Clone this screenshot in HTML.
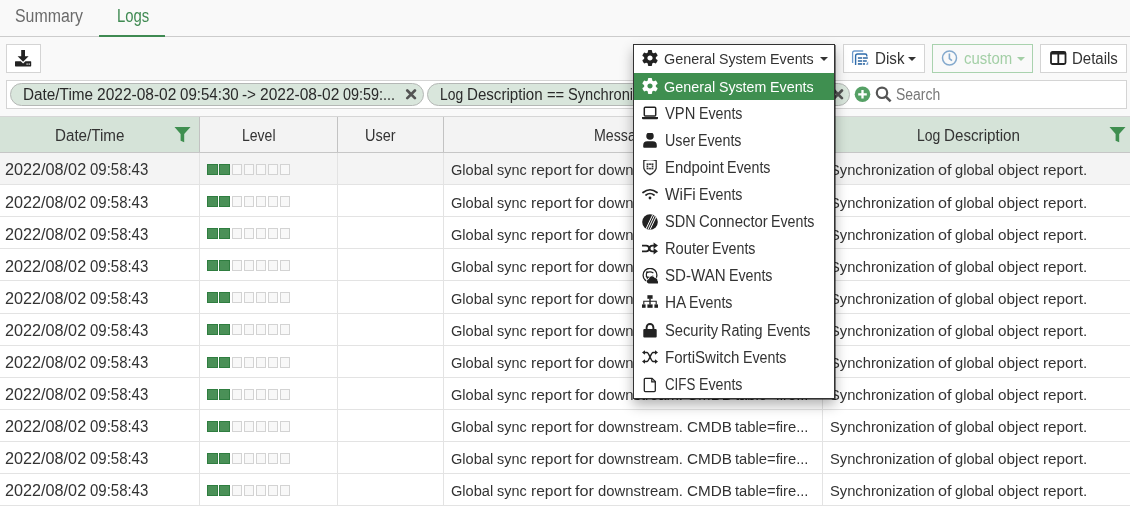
<!DOCTYPE html>
<html><head><meta charset="utf-8"><style>
html,body{margin:0;padding:0}
body{width:1130px;height:514px;overflow:hidden;position:relative;background:#f9f9f9;font-family:"Liberation Sans",sans-serif;color:#333}
#w{position:absolute;left:0;top:0;width:1130px;height:514px;will-change:transform}
.t{position:absolute;white-space:nowrap;transform-origin:0 0}
.r{position:absolute}
.btn{position:absolute;background:#fff;border:1px solid #d4d4d4}
.chip{position:absolute;height:21px;border:1px solid #b5b8b6;border-radius:12px;background:#d9e6dc}
.caret{position:absolute;width:0;height:0;border-left:4px solid transparent;border-right:4px solid transparent;border-top:4px solid #333}
</style></head><body><div id="w">
<div class="t" style="left:14.80px;top:7px;font-size:18px;line-height:18px;transform:scaleX(0.8831);color:#6a6a6a;">Summary</div>
<div class="t" style="left:116.80px;top:7px;font-size:18px;line-height:18px;transform:scaleX(0.8271);color:#3f8a52;">Logs</div>
<div class="r" style="left:0px;top:36px;width:1130px;height:1px;background:#cccccc;"></div>
<div class="r" style="left:99px;top:35px;width:66px;height:2px;background:#3f8a52;"></div>
<div class="btn" style="left:6px;top:44px;width:33px;height:27px"></div>
<svg class="r" style="left:15px;top:50px" width="17" height="17" viewBox="0 0 17 17">
<path d="M6.2 0h3.8v6.2h3.6L8.1 11.8 2.6 6.2h3.6z" fill="#222"/>
<path d="M0.6 11.2h5.2l2.3 2.3 2.3-2.3h5.2a0.6 0.6 0 0 1 0.6 0.6v4a0.6 0.6 0 0 1-0.6 0.6H0.6a0.6 0.6 0 0 1-0.6-0.6v-4a0.6 0.6 0 0 1 0.6-0.6z" fill="#222"/>
<rect x="11.5" y="13.5" width="1.2" height="1.2" fill="#fff"/><rect x="13.6" y="13.5" width="1.2" height="1.2" fill="#fff"/>
</svg>
<div class="btn" style="left:843px;top:44px;width:80px;height:27px"></div>
<svg class="r" style="left:846px;top:46px" width="26" height="22" viewBox="0 0 26 22">
<path d="M6.6 17V7a2 2 0 0 1 2-2h8.6" fill="none" stroke="#6d9acb" stroke-width="1.3"/>
<path d="M9.6 19V10a2 2 0 0 1 2-2h7.6a1.6 1.6 0 0 1 1.6 1.6v0.9" fill="none" stroke="#2f6cab" stroke-width="1.4"/>
<g fill="#1f5c9c"><rect x="11.9" y="11.3" width="4.3" height="1.4"/><rect x="17" y="11.3" width="4.8" height="1.4"/><rect x="11.9" y="14.3" width="4.3" height="1.4"/><rect x="17" y="14.3" width="3.8" height="1.4"/><rect x="11.9" y="17.2" width="4.3" height="1.5"/><rect x="17" y="17.2" width="2" height="1.5"/></g>
<path d="M19.8 18.8l2.4-3.6v3.6z" fill="#6d9acb"/>
</svg>
<div class="t" style="left:874.70px;top:51px;font-size:16px;line-height:16px;transform:scaleX(0.9470);color:#333;">Disk</div>
<div class="caret" style="left:908px;top:57px"></div>
<div class="btn" style="left:932px;top:44px;width:99px;height:27px;border-color:#a9d2ae;background:#f9f9f9"></div>
<svg class="r" style="left:941px;top:50px" width="17" height="17" viewBox="0 0 17 17">
<circle cx="8.5" cy="8" r="7" fill="none" stroke="#84a9cd" stroke-width="1.5"/>
<path d="M8.4 3.6v5l2.6 2.1" fill="none" stroke="#84a9cd" stroke-width="1.6"/>
</svg>
<div class="t" style="left:963.70px;top:51px;font-size:16px;line-height:16px;transform:scaleX(0.9331);color:#a3cfa6;">custom</div>
<div class="caret" style="left:1017px;top:57px;border-top-color:#a3cfa6"></div>
<div class="btn" style="left:1040px;top:44px;width:85px;height:27px"></div>
<svg class="r" style="left:1050px;top:51px" width="17" height="14" viewBox="0 0 17 14">
<rect x="1" y="1" width="14.5" height="12" rx="1.5" fill="none" stroke="#222" stroke-width="1.8"/>
<rect x="1" y="1" width="14.5" height="2.5" fill="#222"/>
<rect x="7.4" y="2" width="1.8" height="11" fill="#222"/>
</svg>
<div class="t" style="left:1072.00px;top:51px;font-size:16px;line-height:16px;transform:scaleX(0.9366);color:#333;">Details</div>
<div class="btn" style="left:6px;top:80px;width:1119px;height:27px"></div>
<div class="chip" style="left:10px;top:83px;width:412px"></div>
<div class="t" style="left:23.00px;top:87px;font-size:16px;line-height:16px;transform:scaleX(0.9572);color:#2a2a2a;">Date/Time</div>
<div class="t" style="left:96.82px;top:87px;font-size:16px;line-height:16px;transform:scaleX(0.9695);color:#2a2a2a;">2022-08-02</div>
<div class="t" style="left:179.94px;top:87px;font-size:16px;line-height:16px;transform:scaleX(0.9417);color:#2a2a2a;">09:54:30</div>
<div class="t" style="left:242.38px;top:87px;font-size:16px;line-height:16px;transform:scaleX(0.9559);color:#2a2a2a;">-&gt;</div>
<div class="t" style="left:260.18px;top:87px;font-size:16px;line-height:16px;transform:scaleX(0.9695);color:#2a2a2a;">2022-08-02</div>
<div class="t" style="left:343.31px;top:87px;font-size:16px;line-height:16px;transform:scaleX(0.8994);color:#2a2a2a;">09:59:...</div>
<svg class="r" style="left:405px;top:89px" width="12" height="12" viewBox="0 0 12 12"><path d="M2.3 1.5l7.6 7.6M9.9 1.5l-7.6 7.6" stroke="#545454" stroke-width="2.7" stroke-linecap="round"/></svg>
<div class="chip" style="left:427px;top:83px;width:421px"></div>
<div class="t" style="left:440.30px;top:87px;font-size:16px;line-height:16px;transform:scaleX(0.8676);color:#2a2a2a;">Log</div>
<div class="t" style="left:467.29px;top:87px;font-size:16px;line-height:16px;transform:scaleX(0.9442);color:#2a2a2a;">Description</div>
<div class="t" style="left:546.69px;top:87px;font-size:16px;line-height:16px;transform:scaleX(0.9212);color:#2a2a2a;">==</div>
<div class="t" style="left:567.72px;top:87px;font-size:16px;line-height:16px;transform:scaleX(0.9152);color:#2a2a2a;">Synchronization</div>
<div class="t" style="left:675.73px;top:87px;font-size:16px;line-height:16px;transform:scaleX(1.0048);color:#2a2a2a;">of</div>
<div class="t" style="left:692.72px;top:87px;font-size:16px;line-height:16px;transform:scaleX(0.9100);color:#2a2a2a;">global</div>
<div class="t" style="left:735.37px;top:87px;font-size:16px;line-height:16px;transform:scaleX(0.9494);color:#2a2a2a;">object</div>
<div class="t" style="left:779.73px;top:87px;font-size:16px;line-height:16px;transform:scaleX(0.9493);color:#2a2a2a;">report.</div>
<svg class="r" style="left:832px;top:89px" width="12" height="12" viewBox="0 0 12 12"><path d="M2.3 1.5l7.6 7.6M9.9 1.5l-7.6 7.6" stroke="#545454" stroke-width="2.7" stroke-linecap="round"/></svg>
<svg class="r" style="left:854px;top:86px" width="17" height="17" viewBox="0 0 17 17">
<circle cx="8.5" cy="8.3" r="7.8" fill="#55a065"/><path d="M8.5 4v8.6M4.2 8.3h8.6" stroke="#fff" stroke-width="2.3"/></svg>
<svg class="r" style="left:875px;top:86px" width="17" height="17" viewBox="0 0 17 17">
<circle cx="7" cy="6.8" r="5.2" fill="none" stroke="#555" stroke-width="2.2"/><path d="M10.8 10.6l4.8 4.8" stroke="#555" stroke-width="2.6"/></svg>
<div class="t" style="left:895.80px;top:87px;font-size:16px;line-height:16px;transform:scaleX(0.8718);color:#777;">Search</div>
<div class="r" style="left:0px;top:116px;width:1130px;height:1px;background:#d6d6d6;"></div>
<div class="r" style="left:0px;top:117px;width:1130px;height:35px;background:#f3f3f3;"></div>
<div class="r" style="left:0px;top:117px;width:199px;height:35px;background:#d5e3d8;"></div>
<div class="r" style="left:823px;top:117px;width:307px;height:35px;background:#d5e3d8;"></div>
<div class="r" style="left:0px;top:152px;width:1130px;height:1px;background:#c6c6c6;"></div>
<div class="r" style="left:199px;top:117px;width:1px;height:35px;background:#c2c2c2;"></div>
<div class="r" style="left:337px;top:117px;width:1px;height:35px;background:#c2c2c2;"></div>
<div class="r" style="left:443px;top:117px;width:1px;height:35px;background:#c2c2c2;"></div>
<div class="r" style="left:822px;top:117px;width:1px;height:35px;background:#c2c2c2;"></div>
<div class="t" style="left:54.60px;top:128px;font-size:16px;line-height:16px;transform:scaleX(0.9481);color:#333;">Date/Time</div>
<div class="t" style="left:242.00px;top:128px;font-size:16px;line-height:16px;transform:scaleX(0.8758);color:#333;">Level</div>
<div class="t" style="left:365.00px;top:128px;font-size:16px;line-height:16px;transform:scaleX(0.9053);color:#333;">User</div>
<div class="t" style="left:594.00px;top:128px;font-size:16px;line-height:16px;transform:scaleX(0.8883);color:#333;">Message</div>
<div class="t" style="left:916.60px;top:128px;font-size:16px;line-height:16px;transform:scaleX(0.8718);color:#333;">Log</div>
<div class="t" style="left:943.72px;top:128px;font-size:16px;line-height:16px;transform:scaleX(0.9487);color:#333;">Description</div>
<svg class="r" style="left:174px;top:126px" width="17" height="17" viewBox="0 0 17 17"><path d="M0.5 1h16l-6.3 7v8.3l-3.6-1.6V8z" fill="#3f8f50"/></svg>
<svg class="r" style="left:1109px;top:126px" width="17" height="17" viewBox="0 0 17 17"><path d="M0.5 1h16l-6.3 7v8.3l-3.6-1.6V8z" fill="#3f8f50"/></svg>
<div class="r" style="left:0px;top:153px;width:1130px;height:31px;background:#f4f4f4;"></div>
<div class="r" style="left:0px;top:184px;width:1130px;height:1px;background:#e3e3e3;"></div>
<div class="r" style="left:199px;top:153px;width:1px;height:31px;background:#e3e3e3;"></div>
<div class="r" style="left:337px;top:153px;width:1px;height:31px;background:#e3e3e3;"></div>
<div class="r" style="left:443px;top:153px;width:1px;height:31px;background:#e3e3e3;"></div>
<div class="r" style="left:822px;top:153px;width:1px;height:31px;background:#e3e3e3;"></div>
<div class="t" style="left:4.80px;top:161px;font-size:16.5px;line-height:16.5px;transform:scaleX(0.9826);color:#333;">2022/08/02</div>
<div class="t" style="left:89.72px;top:161px;font-size:16.5px;line-height:16.5px;transform:scaleX(0.9070);color:#333;">09:58:43</div>
<div class="r" style="left:207px;top:164px;width:9px;height:9px;background:#4a9057;border:1px solid #2f7d40"></div>
<div class="r" style="left:219px;top:164px;width:9px;height:9px;background:#4a9057;border:1px solid #2f7d40"></div>
<div class="r" style="left:232px;top:164px;width:8px;height:9px;background:#f8f8f8;border:1px solid #d3d3d3"></div>
<div class="r" style="left:244px;top:164px;width:8px;height:9px;background:#f8f8f8;border:1px solid #d3d3d3"></div>
<div class="r" style="left:256px;top:164px;width:8px;height:9px;background:#f8f8f8;border:1px solid #d3d3d3"></div>
<div class="r" style="left:268px;top:164px;width:8px;height:9px;background:#f8f8f8;border:1px solid #d3d3d3"></div>
<div class="r" style="left:280px;top:164px;width:8px;height:9px;background:#f8f8f8;border:1px solid #d3d3d3"></div>
<div class="t" style="left:451.30px;top:162px;font-size:15.5px;line-height:15.5px;transform:scaleX(0.9428);color:#333;">Global</div>
<div class="t" style="left:497.35px;top:162px;font-size:15.5px;line-height:15.5px;transform:scaleX(0.9285);color:#333;">sync</div>
<div class="t" style="left:530.72px;top:162px;font-size:15.5px;line-height:15.5px;transform:scaleX(1.0047);color:#333;">report</div>
<div class="t" style="left:575.27px;top:162px;font-size:15.5px;line-height:15.5px;transform:scaleX(1.0469);color:#333;">for</div>
<div class="t" style="left:597.71px;top:162px;font-size:15.5px;line-height:15.5px;transform:scaleX(0.9575);color:#333;">downstream.</div>
<div class="t" style="left:686.54px;top:162px;font-size:15.5px;line-height:15.5px;transform:scaleX(0.9842);color:#333;">CMDB</div>
<div class="t" style="left:735.30px;top:162px;font-size:15.5px;line-height:15.5px;transform:scaleX(0.9527);color:#333;">table=fire...</div>
<div class="t" style="left:829.70px;top:162px;font-size:15.5px;line-height:15.5px;transform:scaleX(0.9498);color:#333;">Synchronization</div>
<div class="t" style="left:938.30px;top:162px;font-size:15.5px;line-height:15.5px;transform:scaleX(1.0453);color:#333;">of</div>
<div class="t" style="left:955.38px;top:162px;font-size:15.5px;line-height:15.5px;transform:scaleX(0.9448);color:#333;">global</div>
<div class="t" style="left:998.26px;top:162px;font-size:15.5px;line-height:15.5px;transform:scaleX(0.9857);color:#333;">object</div>
<div class="t" style="left:1042.85px;top:162px;font-size:15.5px;line-height:15.5px;transform:scaleX(0.9854);color:#333;">report.</div>
<div class="r" style="left:0px;top:185px;width:1130px;height:31px;background:#ffffff;"></div>
<div class="r" style="left:0px;top:216px;width:1130px;height:1px;background:#e3e3e3;"></div>
<div class="r" style="left:199px;top:185px;width:1px;height:31px;background:#e3e3e3;"></div>
<div class="r" style="left:337px;top:185px;width:1px;height:31px;background:#e3e3e3;"></div>
<div class="r" style="left:443px;top:185px;width:1px;height:31px;background:#e3e3e3;"></div>
<div class="r" style="left:822px;top:185px;width:1px;height:31px;background:#e3e3e3;"></div>
<div class="t" style="left:4.80px;top:194px;font-size:16.5px;line-height:16.5px;transform:scaleX(0.9826);color:#333;">2022/08/02</div>
<div class="t" style="left:89.72px;top:194px;font-size:16.5px;line-height:16.5px;transform:scaleX(0.9070);color:#333;">09:58:43</div>
<div class="r" style="left:207px;top:196px;width:9px;height:9px;background:#4a9057;border:1px solid #2f7d40"></div>
<div class="r" style="left:219px;top:196px;width:9px;height:9px;background:#4a9057;border:1px solid #2f7d40"></div>
<div class="r" style="left:232px;top:196px;width:8px;height:9px;background:#f8f8f8;border:1px solid #d3d3d3"></div>
<div class="r" style="left:244px;top:196px;width:8px;height:9px;background:#f8f8f8;border:1px solid #d3d3d3"></div>
<div class="r" style="left:256px;top:196px;width:8px;height:9px;background:#f8f8f8;border:1px solid #d3d3d3"></div>
<div class="r" style="left:268px;top:196px;width:8px;height:9px;background:#f8f8f8;border:1px solid #d3d3d3"></div>
<div class="r" style="left:280px;top:196px;width:8px;height:9px;background:#f8f8f8;border:1px solid #d3d3d3"></div>
<div class="t" style="left:451.30px;top:195px;font-size:15.5px;line-height:15.5px;transform:scaleX(0.9428);color:#333;">Global</div>
<div class="t" style="left:497.35px;top:195px;font-size:15.5px;line-height:15.5px;transform:scaleX(0.9285);color:#333;">sync</div>
<div class="t" style="left:530.72px;top:195px;font-size:15.5px;line-height:15.5px;transform:scaleX(1.0047);color:#333;">report</div>
<div class="t" style="left:575.27px;top:195px;font-size:15.5px;line-height:15.5px;transform:scaleX(1.0469);color:#333;">for</div>
<div class="t" style="left:597.71px;top:195px;font-size:15.5px;line-height:15.5px;transform:scaleX(0.9575);color:#333;">downstream.</div>
<div class="t" style="left:686.54px;top:195px;font-size:15.5px;line-height:15.5px;transform:scaleX(0.9842);color:#333;">CMDB</div>
<div class="t" style="left:735.30px;top:195px;font-size:15.5px;line-height:15.5px;transform:scaleX(0.9527);color:#333;">table=fire...</div>
<div class="t" style="left:829.70px;top:195px;font-size:15.5px;line-height:15.5px;transform:scaleX(0.9498);color:#333;">Synchronization</div>
<div class="t" style="left:938.30px;top:195px;font-size:15.5px;line-height:15.5px;transform:scaleX(1.0453);color:#333;">of</div>
<div class="t" style="left:955.38px;top:195px;font-size:15.5px;line-height:15.5px;transform:scaleX(0.9448);color:#333;">global</div>
<div class="t" style="left:998.26px;top:195px;font-size:15.5px;line-height:15.5px;transform:scaleX(0.9857);color:#333;">object</div>
<div class="t" style="left:1042.85px;top:195px;font-size:15.5px;line-height:15.5px;transform:scaleX(0.9854);color:#333;">report.</div>
<div class="r" style="left:0px;top:217px;width:1130px;height:31px;background:#ffffff;"></div>
<div class="r" style="left:0px;top:248px;width:1130px;height:1px;background:#e3e3e3;"></div>
<div class="r" style="left:199px;top:217px;width:1px;height:31px;background:#e3e3e3;"></div>
<div class="r" style="left:337px;top:217px;width:1px;height:31px;background:#e3e3e3;"></div>
<div class="r" style="left:443px;top:217px;width:1px;height:31px;background:#e3e3e3;"></div>
<div class="r" style="left:822px;top:217px;width:1px;height:31px;background:#e3e3e3;"></div>
<div class="t" style="left:4.80px;top:226px;font-size:16.5px;line-height:16.5px;transform:scaleX(0.9826);color:#333;">2022/08/02</div>
<div class="t" style="left:89.72px;top:226px;font-size:16.5px;line-height:16.5px;transform:scaleX(0.9070);color:#333;">09:58:43</div>
<div class="r" style="left:207px;top:228px;width:9px;height:9px;background:#4a9057;border:1px solid #2f7d40"></div>
<div class="r" style="left:219px;top:228px;width:9px;height:9px;background:#4a9057;border:1px solid #2f7d40"></div>
<div class="r" style="left:232px;top:228px;width:8px;height:9px;background:#f8f8f8;border:1px solid #d3d3d3"></div>
<div class="r" style="left:244px;top:228px;width:8px;height:9px;background:#f8f8f8;border:1px solid #d3d3d3"></div>
<div class="r" style="left:256px;top:228px;width:8px;height:9px;background:#f8f8f8;border:1px solid #d3d3d3"></div>
<div class="r" style="left:268px;top:228px;width:8px;height:9px;background:#f8f8f8;border:1px solid #d3d3d3"></div>
<div class="r" style="left:280px;top:228px;width:8px;height:9px;background:#f8f8f8;border:1px solid #d3d3d3"></div>
<div class="t" style="left:451.30px;top:227px;font-size:15.5px;line-height:15.5px;transform:scaleX(0.9428);color:#333;">Global</div>
<div class="t" style="left:497.35px;top:227px;font-size:15.5px;line-height:15.5px;transform:scaleX(0.9285);color:#333;">sync</div>
<div class="t" style="left:530.72px;top:227px;font-size:15.5px;line-height:15.5px;transform:scaleX(1.0047);color:#333;">report</div>
<div class="t" style="left:575.27px;top:227px;font-size:15.5px;line-height:15.5px;transform:scaleX(1.0469);color:#333;">for</div>
<div class="t" style="left:597.71px;top:227px;font-size:15.5px;line-height:15.5px;transform:scaleX(0.9575);color:#333;">downstream.</div>
<div class="t" style="left:686.54px;top:227px;font-size:15.5px;line-height:15.5px;transform:scaleX(0.9842);color:#333;">CMDB</div>
<div class="t" style="left:735.30px;top:227px;font-size:15.5px;line-height:15.5px;transform:scaleX(0.9527);color:#333;">table=fire...</div>
<div class="t" style="left:829.70px;top:227px;font-size:15.5px;line-height:15.5px;transform:scaleX(0.9498);color:#333;">Synchronization</div>
<div class="t" style="left:938.30px;top:227px;font-size:15.5px;line-height:15.5px;transform:scaleX(1.0453);color:#333;">of</div>
<div class="t" style="left:955.38px;top:227px;font-size:15.5px;line-height:15.5px;transform:scaleX(0.9448);color:#333;">global</div>
<div class="t" style="left:998.26px;top:227px;font-size:15.5px;line-height:15.5px;transform:scaleX(0.9857);color:#333;">object</div>
<div class="t" style="left:1042.85px;top:227px;font-size:15.5px;line-height:15.5px;transform:scaleX(0.9854);color:#333;">report.</div>
<div class="r" style="left:0px;top:249px;width:1130px;height:31px;background:#ffffff;"></div>
<div class="r" style="left:0px;top:280px;width:1130px;height:1px;background:#e3e3e3;"></div>
<div class="r" style="left:199px;top:249px;width:1px;height:31px;background:#e3e3e3;"></div>
<div class="r" style="left:337px;top:249px;width:1px;height:31px;background:#e3e3e3;"></div>
<div class="r" style="left:443px;top:249px;width:1px;height:31px;background:#e3e3e3;"></div>
<div class="r" style="left:822px;top:249px;width:1px;height:31px;background:#e3e3e3;"></div>
<div class="t" style="left:4.80px;top:258px;font-size:16.5px;line-height:16.5px;transform:scaleX(0.9826);color:#333;">2022/08/02</div>
<div class="t" style="left:89.72px;top:258px;font-size:16.5px;line-height:16.5px;transform:scaleX(0.9070);color:#333;">09:58:43</div>
<div class="r" style="left:207px;top:260px;width:9px;height:9px;background:#4a9057;border:1px solid #2f7d40"></div>
<div class="r" style="left:219px;top:260px;width:9px;height:9px;background:#4a9057;border:1px solid #2f7d40"></div>
<div class="r" style="left:232px;top:260px;width:8px;height:9px;background:#f8f8f8;border:1px solid #d3d3d3"></div>
<div class="r" style="left:244px;top:260px;width:8px;height:9px;background:#f8f8f8;border:1px solid #d3d3d3"></div>
<div class="r" style="left:256px;top:260px;width:8px;height:9px;background:#f8f8f8;border:1px solid #d3d3d3"></div>
<div class="r" style="left:268px;top:260px;width:8px;height:9px;background:#f8f8f8;border:1px solid #d3d3d3"></div>
<div class="r" style="left:280px;top:260px;width:8px;height:9px;background:#f8f8f8;border:1px solid #d3d3d3"></div>
<div class="t" style="left:451.30px;top:259px;font-size:15.5px;line-height:15.5px;transform:scaleX(0.9428);color:#333;">Global</div>
<div class="t" style="left:497.35px;top:259px;font-size:15.5px;line-height:15.5px;transform:scaleX(0.9285);color:#333;">sync</div>
<div class="t" style="left:530.72px;top:259px;font-size:15.5px;line-height:15.5px;transform:scaleX(1.0047);color:#333;">report</div>
<div class="t" style="left:575.27px;top:259px;font-size:15.5px;line-height:15.5px;transform:scaleX(1.0469);color:#333;">for</div>
<div class="t" style="left:597.71px;top:259px;font-size:15.5px;line-height:15.5px;transform:scaleX(0.9575);color:#333;">downstream.</div>
<div class="t" style="left:686.54px;top:259px;font-size:15.5px;line-height:15.5px;transform:scaleX(0.9842);color:#333;">CMDB</div>
<div class="t" style="left:735.30px;top:259px;font-size:15.5px;line-height:15.5px;transform:scaleX(0.9527);color:#333;">table=fire...</div>
<div class="t" style="left:829.70px;top:259px;font-size:15.5px;line-height:15.5px;transform:scaleX(0.9498);color:#333;">Synchronization</div>
<div class="t" style="left:938.30px;top:259px;font-size:15.5px;line-height:15.5px;transform:scaleX(1.0453);color:#333;">of</div>
<div class="t" style="left:955.38px;top:259px;font-size:15.5px;line-height:15.5px;transform:scaleX(0.9448);color:#333;">global</div>
<div class="t" style="left:998.26px;top:259px;font-size:15.5px;line-height:15.5px;transform:scaleX(0.9857);color:#333;">object</div>
<div class="t" style="left:1042.85px;top:259px;font-size:15.5px;line-height:15.5px;transform:scaleX(0.9854);color:#333;">report.</div>
<div class="r" style="left:0px;top:281px;width:1130px;height:32px;background:#ffffff;"></div>
<div class="r" style="left:0px;top:313px;width:1130px;height:1px;background:#e3e3e3;"></div>
<div class="r" style="left:199px;top:281px;width:1px;height:32px;background:#e3e3e3;"></div>
<div class="r" style="left:337px;top:281px;width:1px;height:32px;background:#e3e3e3;"></div>
<div class="r" style="left:443px;top:281px;width:1px;height:32px;background:#e3e3e3;"></div>
<div class="r" style="left:822px;top:281px;width:1px;height:32px;background:#e3e3e3;"></div>
<div class="t" style="left:4.80px;top:290px;font-size:16.5px;line-height:16.5px;transform:scaleX(0.9826);color:#333;">2022/08/02</div>
<div class="t" style="left:89.72px;top:290px;font-size:16.5px;line-height:16.5px;transform:scaleX(0.9070);color:#333;">09:58:43</div>
<div class="r" style="left:207px;top:292px;width:9px;height:9px;background:#4a9057;border:1px solid #2f7d40"></div>
<div class="r" style="left:219px;top:292px;width:9px;height:9px;background:#4a9057;border:1px solid #2f7d40"></div>
<div class="r" style="left:232px;top:292px;width:8px;height:9px;background:#f8f8f8;border:1px solid #d3d3d3"></div>
<div class="r" style="left:244px;top:292px;width:8px;height:9px;background:#f8f8f8;border:1px solid #d3d3d3"></div>
<div class="r" style="left:256px;top:292px;width:8px;height:9px;background:#f8f8f8;border:1px solid #d3d3d3"></div>
<div class="r" style="left:268px;top:292px;width:8px;height:9px;background:#f8f8f8;border:1px solid #d3d3d3"></div>
<div class="r" style="left:280px;top:292px;width:8px;height:9px;background:#f8f8f8;border:1px solid #d3d3d3"></div>
<div class="t" style="left:451.30px;top:291px;font-size:15.5px;line-height:15.5px;transform:scaleX(0.9428);color:#333;">Global</div>
<div class="t" style="left:497.35px;top:291px;font-size:15.5px;line-height:15.5px;transform:scaleX(0.9285);color:#333;">sync</div>
<div class="t" style="left:530.72px;top:291px;font-size:15.5px;line-height:15.5px;transform:scaleX(1.0047);color:#333;">report</div>
<div class="t" style="left:575.27px;top:291px;font-size:15.5px;line-height:15.5px;transform:scaleX(1.0469);color:#333;">for</div>
<div class="t" style="left:597.71px;top:291px;font-size:15.5px;line-height:15.5px;transform:scaleX(0.9575);color:#333;">downstream.</div>
<div class="t" style="left:686.54px;top:291px;font-size:15.5px;line-height:15.5px;transform:scaleX(0.9842);color:#333;">CMDB</div>
<div class="t" style="left:735.30px;top:291px;font-size:15.5px;line-height:15.5px;transform:scaleX(0.9527);color:#333;">table=fire...</div>
<div class="t" style="left:829.70px;top:291px;font-size:15.5px;line-height:15.5px;transform:scaleX(0.9498);color:#333;">Synchronization</div>
<div class="t" style="left:938.30px;top:291px;font-size:15.5px;line-height:15.5px;transform:scaleX(1.0453);color:#333;">of</div>
<div class="t" style="left:955.38px;top:291px;font-size:15.5px;line-height:15.5px;transform:scaleX(0.9448);color:#333;">global</div>
<div class="t" style="left:998.26px;top:291px;font-size:15.5px;line-height:15.5px;transform:scaleX(0.9857);color:#333;">object</div>
<div class="t" style="left:1042.85px;top:291px;font-size:15.5px;line-height:15.5px;transform:scaleX(0.9854);color:#333;">report.</div>
<div class="r" style="left:0px;top:314px;width:1130px;height:31px;background:#ffffff;"></div>
<div class="r" style="left:0px;top:345px;width:1130px;height:1px;background:#e3e3e3;"></div>
<div class="r" style="left:199px;top:314px;width:1px;height:31px;background:#e3e3e3;"></div>
<div class="r" style="left:337px;top:314px;width:1px;height:31px;background:#e3e3e3;"></div>
<div class="r" style="left:443px;top:314px;width:1px;height:31px;background:#e3e3e3;"></div>
<div class="r" style="left:822px;top:314px;width:1px;height:31px;background:#e3e3e3;"></div>
<div class="t" style="left:4.80px;top:322px;font-size:16.5px;line-height:16.5px;transform:scaleX(0.9826);color:#333;">2022/08/02</div>
<div class="t" style="left:89.72px;top:322px;font-size:16.5px;line-height:16.5px;transform:scaleX(0.9070);color:#333;">09:58:43</div>
<div class="r" style="left:207px;top:324px;width:9px;height:9px;background:#4a9057;border:1px solid #2f7d40"></div>
<div class="r" style="left:219px;top:324px;width:9px;height:9px;background:#4a9057;border:1px solid #2f7d40"></div>
<div class="r" style="left:232px;top:324px;width:8px;height:9px;background:#f8f8f8;border:1px solid #d3d3d3"></div>
<div class="r" style="left:244px;top:324px;width:8px;height:9px;background:#f8f8f8;border:1px solid #d3d3d3"></div>
<div class="r" style="left:256px;top:324px;width:8px;height:9px;background:#f8f8f8;border:1px solid #d3d3d3"></div>
<div class="r" style="left:268px;top:324px;width:8px;height:9px;background:#f8f8f8;border:1px solid #d3d3d3"></div>
<div class="r" style="left:280px;top:324px;width:8px;height:9px;background:#f8f8f8;border:1px solid #d3d3d3"></div>
<div class="t" style="left:451.30px;top:323px;font-size:15.5px;line-height:15.5px;transform:scaleX(0.9428);color:#333;">Global</div>
<div class="t" style="left:497.35px;top:323px;font-size:15.5px;line-height:15.5px;transform:scaleX(0.9285);color:#333;">sync</div>
<div class="t" style="left:530.72px;top:323px;font-size:15.5px;line-height:15.5px;transform:scaleX(1.0047);color:#333;">report</div>
<div class="t" style="left:575.27px;top:323px;font-size:15.5px;line-height:15.5px;transform:scaleX(1.0469);color:#333;">for</div>
<div class="t" style="left:597.71px;top:323px;font-size:15.5px;line-height:15.5px;transform:scaleX(0.9575);color:#333;">downstream.</div>
<div class="t" style="left:686.54px;top:323px;font-size:15.5px;line-height:15.5px;transform:scaleX(0.9842);color:#333;">CMDB</div>
<div class="t" style="left:735.30px;top:323px;font-size:15.5px;line-height:15.5px;transform:scaleX(0.9527);color:#333;">table=fire...</div>
<div class="t" style="left:829.70px;top:323px;font-size:15.5px;line-height:15.5px;transform:scaleX(0.9498);color:#333;">Synchronization</div>
<div class="t" style="left:938.30px;top:323px;font-size:15.5px;line-height:15.5px;transform:scaleX(1.0453);color:#333;">of</div>
<div class="t" style="left:955.38px;top:323px;font-size:15.5px;line-height:15.5px;transform:scaleX(0.9448);color:#333;">global</div>
<div class="t" style="left:998.26px;top:323px;font-size:15.5px;line-height:15.5px;transform:scaleX(0.9857);color:#333;">object</div>
<div class="t" style="left:1042.85px;top:323px;font-size:15.5px;line-height:15.5px;transform:scaleX(0.9854);color:#333;">report.</div>
<div class="r" style="left:0px;top:346px;width:1130px;height:31px;background:#ffffff;"></div>
<div class="r" style="left:0px;top:377px;width:1130px;height:1px;background:#e3e3e3;"></div>
<div class="r" style="left:199px;top:346px;width:1px;height:31px;background:#e3e3e3;"></div>
<div class="r" style="left:337px;top:346px;width:1px;height:31px;background:#e3e3e3;"></div>
<div class="r" style="left:443px;top:346px;width:1px;height:31px;background:#e3e3e3;"></div>
<div class="r" style="left:822px;top:346px;width:1px;height:31px;background:#e3e3e3;"></div>
<div class="t" style="left:4.80px;top:354px;font-size:16.5px;line-height:16.5px;transform:scaleX(0.9826);color:#333;">2022/08/02</div>
<div class="t" style="left:89.72px;top:354px;font-size:16.5px;line-height:16.5px;transform:scaleX(0.9070);color:#333;">09:58:43</div>
<div class="r" style="left:207px;top:357px;width:9px;height:9px;background:#4a9057;border:1px solid #2f7d40"></div>
<div class="r" style="left:219px;top:357px;width:9px;height:9px;background:#4a9057;border:1px solid #2f7d40"></div>
<div class="r" style="left:232px;top:357px;width:8px;height:9px;background:#f8f8f8;border:1px solid #d3d3d3"></div>
<div class="r" style="left:244px;top:357px;width:8px;height:9px;background:#f8f8f8;border:1px solid #d3d3d3"></div>
<div class="r" style="left:256px;top:357px;width:8px;height:9px;background:#f8f8f8;border:1px solid #d3d3d3"></div>
<div class="r" style="left:268px;top:357px;width:8px;height:9px;background:#f8f8f8;border:1px solid #d3d3d3"></div>
<div class="r" style="left:280px;top:357px;width:8px;height:9px;background:#f8f8f8;border:1px solid #d3d3d3"></div>
<div class="t" style="left:451.30px;top:355px;font-size:15.5px;line-height:15.5px;transform:scaleX(0.9428);color:#333;">Global</div>
<div class="t" style="left:497.35px;top:355px;font-size:15.5px;line-height:15.5px;transform:scaleX(0.9285);color:#333;">sync</div>
<div class="t" style="left:530.72px;top:355px;font-size:15.5px;line-height:15.5px;transform:scaleX(1.0047);color:#333;">report</div>
<div class="t" style="left:575.27px;top:355px;font-size:15.5px;line-height:15.5px;transform:scaleX(1.0469);color:#333;">for</div>
<div class="t" style="left:597.71px;top:355px;font-size:15.5px;line-height:15.5px;transform:scaleX(0.9575);color:#333;">downstream.</div>
<div class="t" style="left:686.54px;top:355px;font-size:15.5px;line-height:15.5px;transform:scaleX(0.9842);color:#333;">CMDB</div>
<div class="t" style="left:735.30px;top:355px;font-size:15.5px;line-height:15.5px;transform:scaleX(0.9527);color:#333;">table=fire...</div>
<div class="t" style="left:829.70px;top:355px;font-size:15.5px;line-height:15.5px;transform:scaleX(0.9498);color:#333;">Synchronization</div>
<div class="t" style="left:938.30px;top:355px;font-size:15.5px;line-height:15.5px;transform:scaleX(1.0453);color:#333;">of</div>
<div class="t" style="left:955.38px;top:355px;font-size:15.5px;line-height:15.5px;transform:scaleX(0.9448);color:#333;">global</div>
<div class="t" style="left:998.26px;top:355px;font-size:15.5px;line-height:15.5px;transform:scaleX(0.9857);color:#333;">object</div>
<div class="t" style="left:1042.85px;top:355px;font-size:15.5px;line-height:15.5px;transform:scaleX(0.9854);color:#333;">report.</div>
<div class="r" style="left:0px;top:378px;width:1130px;height:31px;background:#ffffff;"></div>
<div class="r" style="left:0px;top:409px;width:1130px;height:1px;background:#e3e3e3;"></div>
<div class="r" style="left:199px;top:378px;width:1px;height:31px;background:#e3e3e3;"></div>
<div class="r" style="left:337px;top:378px;width:1px;height:31px;background:#e3e3e3;"></div>
<div class="r" style="left:443px;top:378px;width:1px;height:31px;background:#e3e3e3;"></div>
<div class="r" style="left:822px;top:378px;width:1px;height:31px;background:#e3e3e3;"></div>
<div class="t" style="left:4.80px;top:386px;font-size:16.5px;line-height:16.5px;transform:scaleX(0.9826);color:#333;">2022/08/02</div>
<div class="t" style="left:89.72px;top:386px;font-size:16.5px;line-height:16.5px;transform:scaleX(0.9070);color:#333;">09:58:43</div>
<div class="r" style="left:207px;top:389px;width:9px;height:9px;background:#4a9057;border:1px solid #2f7d40"></div>
<div class="r" style="left:219px;top:389px;width:9px;height:9px;background:#4a9057;border:1px solid #2f7d40"></div>
<div class="r" style="left:232px;top:389px;width:8px;height:9px;background:#f8f8f8;border:1px solid #d3d3d3"></div>
<div class="r" style="left:244px;top:389px;width:8px;height:9px;background:#f8f8f8;border:1px solid #d3d3d3"></div>
<div class="r" style="left:256px;top:389px;width:8px;height:9px;background:#f8f8f8;border:1px solid #d3d3d3"></div>
<div class="r" style="left:268px;top:389px;width:8px;height:9px;background:#f8f8f8;border:1px solid #d3d3d3"></div>
<div class="r" style="left:280px;top:389px;width:8px;height:9px;background:#f8f8f8;border:1px solid #d3d3d3"></div>
<div class="t" style="left:451.30px;top:387px;font-size:15.5px;line-height:15.5px;transform:scaleX(0.9428);color:#333;">Global</div>
<div class="t" style="left:497.35px;top:387px;font-size:15.5px;line-height:15.5px;transform:scaleX(0.9285);color:#333;">sync</div>
<div class="t" style="left:530.72px;top:387px;font-size:15.5px;line-height:15.5px;transform:scaleX(1.0047);color:#333;">report</div>
<div class="t" style="left:575.27px;top:387px;font-size:15.5px;line-height:15.5px;transform:scaleX(1.0469);color:#333;">for</div>
<div class="t" style="left:597.71px;top:387px;font-size:15.5px;line-height:15.5px;transform:scaleX(0.9575);color:#333;">downstream.</div>
<div class="t" style="left:686.54px;top:387px;font-size:15.5px;line-height:15.5px;transform:scaleX(0.9842);color:#333;">CMDB</div>
<div class="t" style="left:735.30px;top:387px;font-size:15.5px;line-height:15.5px;transform:scaleX(0.9527);color:#333;">table=fire...</div>
<div class="t" style="left:829.70px;top:387px;font-size:15.5px;line-height:15.5px;transform:scaleX(0.9498);color:#333;">Synchronization</div>
<div class="t" style="left:938.30px;top:387px;font-size:15.5px;line-height:15.5px;transform:scaleX(1.0453);color:#333;">of</div>
<div class="t" style="left:955.38px;top:387px;font-size:15.5px;line-height:15.5px;transform:scaleX(0.9448);color:#333;">global</div>
<div class="t" style="left:998.26px;top:387px;font-size:15.5px;line-height:15.5px;transform:scaleX(0.9857);color:#333;">object</div>
<div class="t" style="left:1042.85px;top:387px;font-size:15.5px;line-height:15.5px;transform:scaleX(0.9854);color:#333;">report.</div>
<div class="r" style="left:0px;top:410px;width:1130px;height:31px;background:#ffffff;"></div>
<div class="r" style="left:0px;top:441px;width:1130px;height:1px;background:#e3e3e3;"></div>
<div class="r" style="left:199px;top:410px;width:1px;height:31px;background:#e3e3e3;"></div>
<div class="r" style="left:337px;top:410px;width:1px;height:31px;background:#e3e3e3;"></div>
<div class="r" style="left:443px;top:410px;width:1px;height:31px;background:#e3e3e3;"></div>
<div class="r" style="left:822px;top:410px;width:1px;height:31px;background:#e3e3e3;"></div>
<div class="t" style="left:4.80px;top:418px;font-size:16.5px;line-height:16.5px;transform:scaleX(0.9826);color:#333;">2022/08/02</div>
<div class="t" style="left:89.72px;top:418px;font-size:16.5px;line-height:16.5px;transform:scaleX(0.9070);color:#333;">09:58:43</div>
<div class="r" style="left:207px;top:421px;width:9px;height:9px;background:#4a9057;border:1px solid #2f7d40"></div>
<div class="r" style="left:219px;top:421px;width:9px;height:9px;background:#4a9057;border:1px solid #2f7d40"></div>
<div class="r" style="left:232px;top:421px;width:8px;height:9px;background:#f8f8f8;border:1px solid #d3d3d3"></div>
<div class="r" style="left:244px;top:421px;width:8px;height:9px;background:#f8f8f8;border:1px solid #d3d3d3"></div>
<div class="r" style="left:256px;top:421px;width:8px;height:9px;background:#f8f8f8;border:1px solid #d3d3d3"></div>
<div class="r" style="left:268px;top:421px;width:8px;height:9px;background:#f8f8f8;border:1px solid #d3d3d3"></div>
<div class="r" style="left:280px;top:421px;width:8px;height:9px;background:#f8f8f8;border:1px solid #d3d3d3"></div>
<div class="t" style="left:451.30px;top:419px;font-size:15.5px;line-height:15.5px;transform:scaleX(0.9428);color:#333;">Global</div>
<div class="t" style="left:497.35px;top:419px;font-size:15.5px;line-height:15.5px;transform:scaleX(0.9285);color:#333;">sync</div>
<div class="t" style="left:530.72px;top:419px;font-size:15.5px;line-height:15.5px;transform:scaleX(1.0047);color:#333;">report</div>
<div class="t" style="left:575.27px;top:419px;font-size:15.5px;line-height:15.5px;transform:scaleX(1.0469);color:#333;">for</div>
<div class="t" style="left:597.71px;top:419px;font-size:15.5px;line-height:15.5px;transform:scaleX(0.9575);color:#333;">downstream.</div>
<div class="t" style="left:686.54px;top:419px;font-size:15.5px;line-height:15.5px;transform:scaleX(0.9842);color:#333;">CMDB</div>
<div class="t" style="left:735.30px;top:419px;font-size:15.5px;line-height:15.5px;transform:scaleX(0.9527);color:#333;">table=fire...</div>
<div class="t" style="left:829.70px;top:419px;font-size:15.5px;line-height:15.5px;transform:scaleX(0.9498);color:#333;">Synchronization</div>
<div class="t" style="left:938.30px;top:419px;font-size:15.5px;line-height:15.5px;transform:scaleX(1.0453);color:#333;">of</div>
<div class="t" style="left:955.38px;top:419px;font-size:15.5px;line-height:15.5px;transform:scaleX(0.9448);color:#333;">global</div>
<div class="t" style="left:998.26px;top:419px;font-size:15.5px;line-height:15.5px;transform:scaleX(0.9857);color:#333;">object</div>
<div class="t" style="left:1042.85px;top:419px;font-size:15.5px;line-height:15.5px;transform:scaleX(0.9854);color:#333;">report.</div>
<div class="r" style="left:0px;top:442px;width:1130px;height:31px;background:#ffffff;"></div>
<div class="r" style="left:0px;top:473px;width:1130px;height:1px;background:#e3e3e3;"></div>
<div class="r" style="left:199px;top:442px;width:1px;height:31px;background:#e3e3e3;"></div>
<div class="r" style="left:337px;top:442px;width:1px;height:31px;background:#e3e3e3;"></div>
<div class="r" style="left:443px;top:442px;width:1px;height:31px;background:#e3e3e3;"></div>
<div class="r" style="left:822px;top:442px;width:1px;height:31px;background:#e3e3e3;"></div>
<div class="t" style="left:4.80px;top:450px;font-size:16.5px;line-height:16.5px;transform:scaleX(0.9826);color:#333;">2022/08/02</div>
<div class="t" style="left:89.72px;top:450px;font-size:16.5px;line-height:16.5px;transform:scaleX(0.9070);color:#333;">09:58:43</div>
<div class="r" style="left:207px;top:453px;width:9px;height:9px;background:#4a9057;border:1px solid #2f7d40"></div>
<div class="r" style="left:219px;top:453px;width:9px;height:9px;background:#4a9057;border:1px solid #2f7d40"></div>
<div class="r" style="left:232px;top:453px;width:8px;height:9px;background:#f8f8f8;border:1px solid #d3d3d3"></div>
<div class="r" style="left:244px;top:453px;width:8px;height:9px;background:#f8f8f8;border:1px solid #d3d3d3"></div>
<div class="r" style="left:256px;top:453px;width:8px;height:9px;background:#f8f8f8;border:1px solid #d3d3d3"></div>
<div class="r" style="left:268px;top:453px;width:8px;height:9px;background:#f8f8f8;border:1px solid #d3d3d3"></div>
<div class="r" style="left:280px;top:453px;width:8px;height:9px;background:#f8f8f8;border:1px solid #d3d3d3"></div>
<div class="t" style="left:451.30px;top:451px;font-size:15.5px;line-height:15.5px;transform:scaleX(0.9428);color:#333;">Global</div>
<div class="t" style="left:497.35px;top:451px;font-size:15.5px;line-height:15.5px;transform:scaleX(0.9285);color:#333;">sync</div>
<div class="t" style="left:530.72px;top:451px;font-size:15.5px;line-height:15.5px;transform:scaleX(1.0047);color:#333;">report</div>
<div class="t" style="left:575.27px;top:451px;font-size:15.5px;line-height:15.5px;transform:scaleX(1.0469);color:#333;">for</div>
<div class="t" style="left:597.71px;top:451px;font-size:15.5px;line-height:15.5px;transform:scaleX(0.9575);color:#333;">downstream.</div>
<div class="t" style="left:686.54px;top:451px;font-size:15.5px;line-height:15.5px;transform:scaleX(0.9842);color:#333;">CMDB</div>
<div class="t" style="left:735.30px;top:451px;font-size:15.5px;line-height:15.5px;transform:scaleX(0.9527);color:#333;">table=fire...</div>
<div class="t" style="left:829.70px;top:451px;font-size:15.5px;line-height:15.5px;transform:scaleX(0.9498);color:#333;">Synchronization</div>
<div class="t" style="left:938.30px;top:451px;font-size:15.5px;line-height:15.5px;transform:scaleX(1.0453);color:#333;">of</div>
<div class="t" style="left:955.38px;top:451px;font-size:15.5px;line-height:15.5px;transform:scaleX(0.9448);color:#333;">global</div>
<div class="t" style="left:998.26px;top:451px;font-size:15.5px;line-height:15.5px;transform:scaleX(0.9857);color:#333;">object</div>
<div class="t" style="left:1042.85px;top:451px;font-size:15.5px;line-height:15.5px;transform:scaleX(0.9854);color:#333;">report.</div>
<div class="r" style="left:0px;top:474px;width:1130px;height:31px;background:#ffffff;"></div>
<div class="r" style="left:0px;top:505px;width:1130px;height:1px;background:#e3e3e3;"></div>
<div class="r" style="left:199px;top:474px;width:1px;height:31px;background:#e3e3e3;"></div>
<div class="r" style="left:337px;top:474px;width:1px;height:31px;background:#e3e3e3;"></div>
<div class="r" style="left:443px;top:474px;width:1px;height:31px;background:#e3e3e3;"></div>
<div class="r" style="left:822px;top:474px;width:1px;height:31px;background:#e3e3e3;"></div>
<div class="t" style="left:4.80px;top:482px;font-size:16.5px;line-height:16.5px;transform:scaleX(0.9826);color:#333;">2022/08/02</div>
<div class="t" style="left:89.72px;top:482px;font-size:16.5px;line-height:16.5px;transform:scaleX(0.9070);color:#333;">09:58:43</div>
<div class="r" style="left:207px;top:485px;width:9px;height:9px;background:#4a9057;border:1px solid #2f7d40"></div>
<div class="r" style="left:219px;top:485px;width:9px;height:9px;background:#4a9057;border:1px solid #2f7d40"></div>
<div class="r" style="left:232px;top:485px;width:8px;height:9px;background:#f8f8f8;border:1px solid #d3d3d3"></div>
<div class="r" style="left:244px;top:485px;width:8px;height:9px;background:#f8f8f8;border:1px solid #d3d3d3"></div>
<div class="r" style="left:256px;top:485px;width:8px;height:9px;background:#f8f8f8;border:1px solid #d3d3d3"></div>
<div class="r" style="left:268px;top:485px;width:8px;height:9px;background:#f8f8f8;border:1px solid #d3d3d3"></div>
<div class="r" style="left:280px;top:485px;width:8px;height:9px;background:#f8f8f8;border:1px solid #d3d3d3"></div>
<div class="t" style="left:451.30px;top:483px;font-size:15.5px;line-height:15.5px;transform:scaleX(0.9428);color:#333;">Global</div>
<div class="t" style="left:497.35px;top:483px;font-size:15.5px;line-height:15.5px;transform:scaleX(0.9285);color:#333;">sync</div>
<div class="t" style="left:530.72px;top:483px;font-size:15.5px;line-height:15.5px;transform:scaleX(1.0047);color:#333;">report</div>
<div class="t" style="left:575.27px;top:483px;font-size:15.5px;line-height:15.5px;transform:scaleX(1.0469);color:#333;">for</div>
<div class="t" style="left:597.71px;top:483px;font-size:15.5px;line-height:15.5px;transform:scaleX(0.9575);color:#333;">downstream.</div>
<div class="t" style="left:686.54px;top:483px;font-size:15.5px;line-height:15.5px;transform:scaleX(0.9842);color:#333;">CMDB</div>
<div class="t" style="left:735.30px;top:483px;font-size:15.5px;line-height:15.5px;transform:scaleX(0.9527);color:#333;">table=fire...</div>
<div class="t" style="left:829.70px;top:483px;font-size:15.5px;line-height:15.5px;transform:scaleX(0.9498);color:#333;">Synchronization</div>
<div class="t" style="left:938.30px;top:483px;font-size:15.5px;line-height:15.5px;transform:scaleX(1.0453);color:#333;">of</div>
<div class="t" style="left:955.38px;top:483px;font-size:15.5px;line-height:15.5px;transform:scaleX(0.9448);color:#333;">global</div>
<div class="t" style="left:998.26px;top:483px;font-size:15.5px;line-height:15.5px;transform:scaleX(0.9857);color:#333;">object</div>
<div class="t" style="left:1042.85px;top:483px;font-size:15.5px;line-height:15.5px;transform:scaleX(0.9854);color:#333;">report.</div>
<div class="r" style="left:0px;top:506px;width:1130px;height:8px;background:#fff;"></div>
<div class="r" style="left:633px;top:44px;width:200px;height:353px;background:#fff;border:1px solid #333;box-shadow:1px 1px 0 rgba(0,0,0,.45),0 6px 12px rgba(0,0,0,.3)"></div>
<svg class="r" style="left:642px;top:50px" width="16" height="16" viewBox="0 0 16 16"><g transform="translate(8 8)" fill="#222"><circle r="4.25" fill="none" stroke="#222" stroke-width="3.3"/><rect x="-2.1" y="-7.9" width="4.2" height="4" rx="0.9" transform="rotate(0)"/><rect x="-2.1" y="-7.9" width="4.2" height="4" rx="0.9" transform="rotate(60)"/><rect x="-2.1" y="-7.9" width="4.2" height="4" rx="0.9" transform="rotate(120)"/><rect x="-2.1" y="-7.9" width="4.2" height="4" rx="0.9" transform="rotate(180)"/><rect x="-2.1" y="-7.9" width="4.2" height="4" rx="0.9" transform="rotate(240)"/><rect x="-2.1" y="-7.9" width="4.2" height="4" rx="0.9" transform="rotate(300)"/></g></svg>
<div class="t" style="left:664.40px;top:51px;font-size:15.5px;line-height:15.5px;transform:scaleX(0.9280);color:#333;">General</div>
<div class="t" style="left:719.41px;top:51px;font-size:15.5px;line-height:15.5px;transform:scaleX(0.9138);color:#333;">System</div>
<div class="t" style="left:770.47px;top:51px;font-size:15.5px;line-height:15.5px;transform:scaleX(0.9222);color:#333;">Events</div>
<div class="caret" style="left:820px;top:57px"></div>
<div class="r" style="left:634px;top:73px;width:200px;height:27px;background:#3f8f50;"></div>
<svg class="r" style="left:642px;top:78px" width="16" height="16" viewBox="0 0 16 16"><g transform="translate(8 8)" fill="#fff"><circle r="4.25" fill="none" stroke="#fff" stroke-width="3.3"/><rect x="-2.1" y="-7.9" width="4.2" height="4" rx="0.9" transform="rotate(0)"/><rect x="-2.1" y="-7.9" width="4.2" height="4" rx="0.9" transform="rotate(60)"/><rect x="-2.1" y="-7.9" width="4.2" height="4" rx="0.9" transform="rotate(120)"/><rect x="-2.1" y="-7.9" width="4.2" height="4" rx="0.9" transform="rotate(180)"/><rect x="-2.1" y="-7.9" width="4.2" height="4" rx="0.9" transform="rotate(240)"/><rect x="-2.1" y="-7.9" width="4.2" height="4" rx="0.9" transform="rotate(300)"/></g></svg>
<div class="t" style="left:664.40px;top:79px;font-size:15.5px;line-height:15.5px;transform:scaleX(0.9280);color:#fff;">General</div>
<div class="t" style="left:719.41px;top:79px;font-size:15.5px;line-height:15.5px;transform:scaleX(0.9138);color:#fff;">System</div>
<div class="t" style="left:770.47px;top:79px;font-size:15.5px;line-height:15.5px;transform:scaleX(0.9222);color:#fff;">Events</div>
<div class="t" style="left:664.50px;top:106px;font-size:16px;line-height:16px;transform:scaleX(0.9208);color:#333;">VPN</div>
<div class="t" style="left:698.61px;top:106px;font-size:16px;line-height:16px;transform:scaleX(0.8888);color:#333;">Events</div>
<svg class="r" style="left:642px;top:106px" width="16" height="16" viewBox="0 0 16 16"><rect x="2.3" y="1.3" width="11.4" height="8.6" rx="1" fill="none" stroke="#222" stroke-width="1.5"/><path d="M0 11h16v1.3a1 1 0 0 1-1 1H1a1 1 0 0 1-1-1z" fill="#222"/></svg>
<div class="t" style="left:664.50px;top:133px;font-size:16px;line-height:16px;transform:scaleX(0.8948);color:#333;">User</div>
<div class="t" style="left:698.23px;top:133px;font-size:16px;line-height:16px;transform:scaleX(0.8888);color:#333;">Events</div>
<svg class="r" style="left:642px;top:133px" width="16" height="16" viewBox="0 0 16 16"><circle cx="8" cy="3.1" r="3.75" fill="#222"/><path d="M1.2 14V12.2Q1.2 8.3 5.2 8.3H10.8Q14.8 8.3 14.8 12.2V14a0.9 0.9 0 0 1-0.9 0.8H2.1a0.9 0.9 0 0 1-0.9-0.8z" fill="#222"/></svg>
<div class="t" style="left:664.50px;top:160px;font-size:16px;line-height:16px;transform:scaleX(0.9312);color:#333;">Endpoint</div>
<div class="t" style="left:727.09px;top:160px;font-size:16px;line-height:16px;transform:scaleX(0.8888);color:#333;">Events</div>
<svg class="r" style="left:642px;top:160px" width="16" height="16" viewBox="0 0 16 16"><path d="M1.8 0.6Q8 -1.3 14.2 0.6V8.2Q13 12.2 8 14.7Q3 12.2 1.8 8.2z" fill="none" stroke="#333" stroke-width="1.3"/><g fill="#333"><rect x="4.6" y="3.4" width="2" height="1.6"/><rect x="7.1" y="3.4" width="1.8" height="1.6"/><rect x="9.4" y="3.4" width="2" height="1.6"/><rect x="4.6" y="5.5" width="1.6" height="1.8"/><rect x="9.8" y="5.5" width="1.6" height="1.8"/><rect x="4.6" y="7.8" width="2" height="1.6"/><rect x="7.1" y="7.8" width="1.8" height="1.6"/><rect x="9.4" y="7.8" width="2" height="1.6"/></g></svg>
<div class="t" style="left:664.50px;top:187px;font-size:16px;line-height:16px;transform:scaleX(0.9591);color:#333;">WiFi</div>
<div class="t" style="left:699.01px;top:187px;font-size:16px;line-height:16px;transform:scaleX(0.8888);color:#333;">Events</div>
<svg class="r" style="left:642px;top:187px" width="16" height="16" viewBox="0 0 16 16"><path d="M1 5.5Q8 0 15 5.5" fill="none" stroke="#222" stroke-width="1.7" stroke-linecap="round"/><path d="M4 8Q8 5 12 8" fill="none" stroke="#222" stroke-width="1.7" stroke-linecap="round"/><circle cx="8" cy="11" r="1.4" fill="#222"/></svg>
<div class="t" style="left:664.50px;top:214px;font-size:16px;line-height:16px;transform:scaleX(0.9080);color:#333;">SDN</div>
<div class="t" style="left:698.99px;top:214px;font-size:16px;line-height:16px;transform:scaleX(0.9323);color:#333;">Connector</div>
<div class="t" style="left:771.29px;top:214px;font-size:16px;line-height:16px;transform:scaleX(0.8888);color:#333;">Events</div>
<svg class="r" style="left:642px;top:214px" width="16" height="16" viewBox="0 0 16 16"><defs><clipPath id="cc"><circle cx="8" cy="8" r="7.8"/></clipPath></defs><g clip-path="url(#cc)"><rect x="0" y="0" width="16" height="16" fill="#222"/><path d="M11 0L3 17M13.2 0L5.2 17M15.4 0L7.4 17" stroke="#fff" stroke-width="1"/></g></svg>
<div class="t" style="left:664.50px;top:241px;font-size:16px;line-height:16px;transform:scaleX(0.9178);color:#333;">Router</div>
<div class="t" style="left:712.04px;top:241px;font-size:16px;line-height:16px;transform:scaleX(0.8888);color:#333;">Events</div>
<svg class="r" style="left:642px;top:241px" width="16" height="16" viewBox="0 0 16 16"><path d="M0 4.6h4.2Q7 4.6 7 7.45Q7 10.3 4.2 10.3H0M12.6 4.6H10.4Q7.6 4.6 7.6 7.45Q7.6 10.3 10.4 10.3H12.6" fill="none" stroke="#222" stroke-width="1.8"/><path d="M11.6 1.4l4.4 3.2-4.4 3.2zM11.6 7.1l4.4 3.2-4.4 3.2z" fill="#222"/></svg>
<div class="t" style="left:664.50px;top:268px;font-size:16px;line-height:16px;transform:scaleX(0.9446);color:#333;">SD-WAN</div>
<div class="t" style="left:729.05px;top:268px;font-size:16px;line-height:16px;transform:scaleX(0.8888);color:#333;">Events</div>
<svg class="r" style="left:642px;top:268px" width="16" height="16" viewBox="0 0 16 16"><circle cx="8" cy="7.2" r="6.9" fill="none" stroke="#222" stroke-width="1.3"/><path d="M4.6 5Q8 2.6 11.4 5M3.9 8.2Q7.5 10.6 11.2 7.6M5.2 3.3Q3.2 7.2 5.8 11.2" fill="none" stroke="#222" stroke-width="1.2"/><path d="M6.6 15.6a2.4 2.4 0 0 1 0.3-4.7a3.1 3.1 0 0 1 5.9-0.9a2.5 2.5 0 0 1 2.6 2.9a1.4 1.4 0 0 1 0 2.7z" fill="#222" stroke="#fff" stroke-width="1.3" paint-order="stroke"/></svg>
<div class="t" style="left:664.50px;top:295px;font-size:16px;line-height:16px;transform:scaleX(0.9611);color:#333;">HA</div>
<div class="t" style="left:689.20px;top:295px;font-size:16px;line-height:16px;transform:scaleX(0.8888);color:#333;">Events</div>
<svg class="r" style="left:642px;top:295px" width="16" height="16" viewBox="0 0 16 16"><rect x="5.4" y="0.2" width="5.2" height="3.6" fill="#222"/><rect x="7.3" y="3.5" width="1.4" height="6" fill="#222"/><path d="M1.8 9.5V6.2h12.4v3.3" fill="none" stroke="#222" stroke-width="1.1"/><rect x="0" y="9.4" width="3.6" height="3.4" fill="#222"/><rect x="5.4" y="9.4" width="5.2" height="3.4" fill="#222"/><rect x="12.4" y="9.4" width="3.6" height="3.4" fill="#222"/></svg>
<div class="t" style="left:664.50px;top:323px;font-size:16px;line-height:16px;transform:scaleX(0.9198);color:#333;">Security</div>
<div class="t" style="left:721.11px;top:323px;font-size:16px;line-height:16px;transform:scaleX(0.9001);color:#333;">Rating</div>
<div class="t" style="left:766.54px;top:323px;font-size:16px;line-height:16px;transform:scaleX(0.8888);color:#333;">Events</div>
<svg class="r" style="left:642px;top:323px" width="16" height="16" viewBox="0 0 16 16"><path d="M4.6 6V4.4a3.4 3.4 0 0 1 6.8 0V6" fill="none" stroke="#222" stroke-width="1.9"/><rect x="1.3" y="6" width="13.4" height="8.6" rx="1" fill="#222"/></svg>
<div class="t" style="left:664.50px;top:350px;font-size:16px;line-height:16px;transform:scaleX(0.9393);color:#333;">FortiSwitch</div>
<div class="t" style="left:742.64px;top:350px;font-size:16px;line-height:16px;transform:scaleX(0.8888);color:#333;">Events</div>
<svg class="r" style="left:642px;top:350px" width="16" height="16" viewBox="0 0 16 16"><path d="M2.5 2.5h2.5Q6 2.5 8 7Q10 11.5 11 11.5h2.5M2.5 11.5h2.5Q6 11.5 8 7Q10 2.5 11 2.5h2.5" fill="none" stroke="#222" stroke-width="1.5"/><path d="M0 2.5l3-2.2v4.4zM0 11.5l3-2.2v4.4zM16 2.5l-3-2.2v4.4zM16 11.5l-3-2.2v4.4z" fill="#222"/></svg>
<div class="t" style="left:664.50px;top:377px;font-size:16px;line-height:16px;transform:scaleX(0.8311);color:#333;">CIFS</div>
<div class="t" style="left:698.59px;top:377px;font-size:16px;line-height:16px;transform:scaleX(0.8888);color:#333;">Events</div>
<svg class="r" style="left:642px;top:377px" width="16" height="16" viewBox="0 0 16 16"><path d="M3.3 1.3h6.7l3.3 3.3v9a1 1 0 0 1-1 1H3.3a1 1 0 0 1-1-1v-11.3a1 1 0 0 1 1-1z" fill="none" stroke="#222" stroke-width="1.3"/><path d="M9.8 1.3v3.5h3.5" fill="none" stroke="#222" stroke-width="1.3"/></svg>
</div></body></html>
